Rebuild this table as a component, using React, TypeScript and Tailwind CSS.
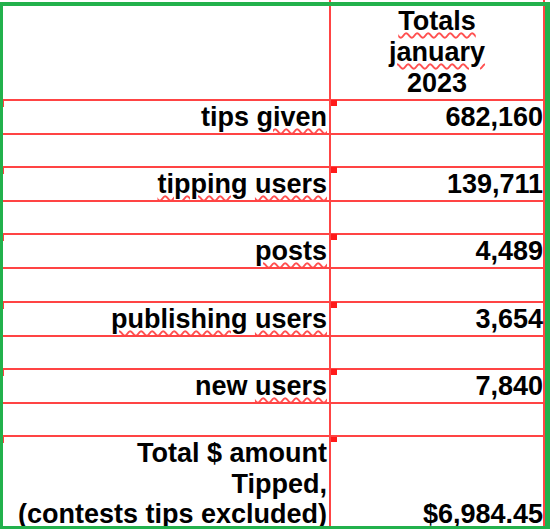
import React from "react";

type Row = {
  label?: React.ReactNode;
  value?: string;
  h: string;
  marked?: boolean;
};

const Wavy: React.FC<{ children: React.ReactNode }> = ({ children }) => (
  <span className="underline decoration-wavy decoration-[#ff5050] decoration-[1.5px] underline-offset-[2px]">
    {children}
  </span>
);

const rows: Row[] = [
  { label: <>tips <Wavy>given</Wavy></>, value: "682,160", h: "h-[34px]", marked: true },
  { h: "h-[33px]" },
  { label: <><Wavy>tipping</Wavy> <Wavy>users</Wavy></>, value: "139,711", h: "h-[34px]", marked: true },
  { h: "h-[33px]" },
  { label: <Wavy>posts</Wavy>, value: "4,489", h: "h-[34px]", marked: true },
  { h: "h-[34px]" },
  { label: <><Wavy>publishing</Wavy> <Wavy>users</Wavy></>, value: "3,654", h: "h-[34px]", marked: true },
  { h: "h-[33px]" },
  { label: <>new <Wavy>users</Wavy></>, value: "7,840", h: "h-[34px]", marked: true },
  { h: "h-[33px]" },
];

const Marks: React.FC = () => (
  <>
    <div className="absolute left-0 top-[-1px] w-[1px] h-[7px] bg-[#ff4040]" />
    <div className="absolute left-[328px] top-[-1px] w-[6px] h-[6px] bg-[#ff1a1a]" />
  </>
);

export default function App() {
  return (
    <div className="w-[550px] h-[529px] bg-white overflow-hidden font-['Liberation_Sans',Arial,sans-serif] font-bold text-black text-[27px]">
      {/* grid lines peeking above the frame */}
      <div className="flex h-[2px]">
        <div className="w-[329px]" />
        <div className="w-[2px] bg-[#ff4444]" />
        <div className="w-[212px]" />
        <div className="w-[2px] bg-[#ff4444]" />
      </div>
      <div className="h-[527px] border-t-4 border-l-[3px] border-r-[5px] border-b-[3px] border-[#22b14c] overflow-hidden">
        {/* header */}
        <div className="flex h-[93px]">
          <div className="w-[328px] border-r-2 border-[#ff4444]" />
          <div className="w-[214px] border-r-2 border-[#ff4444] flex flex-col justify-end">
            <div className="text-center leading-[31px]">
              <div><Wavy>Totals</Wavy></div>
              <div><Wavy>january</Wavy></div>
              <div>2023</div>
            </div>
          </div>
        </div>

        {rows.map((r, i) => (
          <div key={i} className={`relative flex border-t-2 border-[#ff4444] ${r.h}`}>
            <div className="w-[328px] border-r-2 border-[#ff4444] pr-[2px] text-right leading-[32px] whitespace-nowrap">
              {r.label}
            </div>
            <div className="w-[214px] border-r-2 border-[#ff4444] text-right leading-[32px] whitespace-nowrap">
              {r.value}
            </div>
            {r.marked && <Marks />}
          </div>
        ))}

        {/* total row, cut off by the frame as in the sheet */}
        <div className="relative flex border-t-2 border-[#ff4444] h-[91px] overflow-hidden">
          <div className="w-[328px] border-r-2 border-[#ff4444] pr-[2px] pt-[1px] text-right leading-[30.5px] whitespace-nowrap">
            <div>Total $ amount</div>
            <div>Tipped,</div>
            <div>(contests tips excluded)</div>
          </div>
          <div className="w-[214px] border-r-2 border-[#ff4444] pt-[62px] text-right leading-[30.5px] whitespace-nowrap">
            $6,984.45
          </div>
          <Marks />
        </div>
      </div>
    </div>
  );
}
